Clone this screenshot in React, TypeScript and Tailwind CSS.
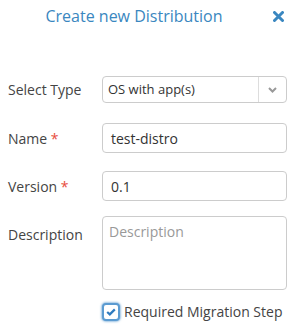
import React from "react";

export default function App() {
  const font = { fontFamily: '"Open Sans", "Noto Sans", sans-serif' };
  return (
    <div className="w-[293px] h-[331px] bg-white text-[#333]" style={font}>
      <div className="flex items-center h-[32px]">
        <div className="w-[268px] text-center text-[16px] text-[#3a87c0] leading-[32px]">
          Create new Distribution
        </div>
        <div className="pl-[5px] flex items-center">
          <svg width="11" height="11" viewBox="0 0 11 11">
            <path d="M1.5 1.5 L9.5 9.5 M9.5 1.5 L1.5 9.5" stroke="#3a87c0" strokeWidth="3" strokeLinecap="round" />
          </svg>
        </div>
      </div>

      <div className="mt-[44px] flex items-center">
        <div className="w-[102px] pl-[8px] text-[14px] text-[#444]">Select Type</div>
        <div className="w-[185px] h-[27px] border border-[#ccc] rounded-[4px] flex items-center">
          <div className="flex-1 pl-[5px] text-[13px] text-[#333]">OS with app(s)</div>
          <div className="w-[28px] h-full border-l border-[#ddd] flex items-center justify-center">
            <svg width="9" height="6" viewBox="0 0 9 6">
              <path d="M1 1 L4.5 4.5 L8 1" stroke="#999" strokeWidth="2" fill="none" />
            </svg>
          </div>
        </div>
      </div>

      <div className="mt-[20px] flex items-center">
        <div className="w-[102px] pl-[8px] text-[14px] text-[#444]">
          Name <span className="text-[#e74c3c]">*</span>
        </div>
        <div className="w-[185px] h-[30px] border border-[#ccc] rounded-[4px] flex items-center pl-[8px] text-[14px] text-[#333]">
          test-distro
        </div>
      </div>

      <div className="mt-[18px] flex items-center">
        <div className="w-[102px] pl-[8px] text-[14px] text-[#444]">
          Version <span className="text-[#e74c3c]">*</span>
        </div>
        <div className="w-[185px] h-[30px] border border-[#ccc] rounded-[4px] flex items-center pl-[8px] text-[14px] text-[#333]">
          0.1
        </div>
      </div>

      <div className="mt-[15px] flex items-start">
        <div className="w-[102px] pl-[8px] pt-[8px] text-[14px] text-[#444]">Description</div>
        <div className="w-[185px] h-[74px] border border-[#ccc] rounded-[4px] pl-[6px] pt-[4px] text-[14px] text-[#999]">
          Description
        </div>
      </div>

      <div className="mt-[11px] flex items-center pl-[102px]">
        <div className="w-[18px] h-[18px] rounded-[4px] border-2 border-[#5b9bd1] shadow-[0_0_2px_1px_rgba(91,155,209,0.6)] flex items-center justify-center bg-white">
          <svg width="10" height="8" viewBox="0 0 10 8">
            <path d="M1.2 4 L3.8 6.4 L8.8 1.4" stroke="#2f7bbf" strokeWidth="2.2" fill="none" />
          </svg>
        </div>
        <div className="pl-[4px] text-[14px] text-[#444]">Required Migration Step</div>
      </div>
    </div>
  );
}
